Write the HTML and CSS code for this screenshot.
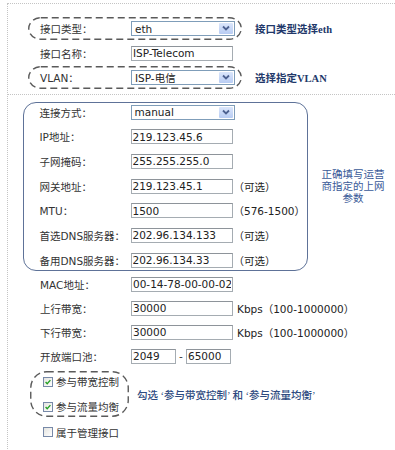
FILE: index.html
```html
<!DOCTYPE html>
<html lang="zh-CN">
<head>
    <meta charset="UTF-8">
    <meta name="viewport" content="width=device-width, initial-scale=1.0">
    <title>WAN接口设置</title>
    <link rel="stylesheet" href="styles.css">
</head>
<body>

    <div class="sheet">

        <!-- 接口类型 / 名称 / VLAN -->
        <div class="top">
            <div class="line">
                <div class="ring">
                    <svg><rect></rect></svg>
                    <div class="field">
                        <span class="lbl">接口类型：</span>
                        <div class="select"><span>eth</span><i class="arrow"><svg viewBox="0 0 14 11"><path d="M4 3.5 L7 6.5 L10 3.5"/></svg></i></div>
                    </div>
                </div>
                <span class="note">接口类型选择eth</span>
            </div>

            <div class="field">
                <span class="lbl">接口名称：</span>
                <input class="txt" type="text" value="ISP-Telecom">
            </div>

            <div class="line">
                <div class="ring">
                    <svg><rect></rect></svg>
                    <div class="field">
                        <span class="lbl">VLAN：</span>
                        <div class="select"><span>ISP-电信</span><i class="arrow"><svg viewBox="0 0 14 11"><path d="M4 3.5 L7 6.5 L10 3.5"/></svg></i></div>
                    </div>
                </div>
                <span class="note">选择指定VLAN</span>
            </div>
        </div>

        <div class="main">
            <!-- 运营商参数 -->
            <div class="wrap">
                <div class="box">
                    <div class="field">
                        <span class="lbl">连接方式：</span>
                        <div class="select"><span>manual</span><i class="arrow"><svg viewBox="0 0 14 11"><path d="M4 3.5 L7 6.5 L10 3.5"/></svg></i></div>
                    </div>
                    <div class="field">
                        <span class="lbl">IP地址：</span>
                        <input class="txt" type="text" value="219.123.45.6">
                    </div>
                    <div class="field">
                        <span class="lbl">子网掩码：</span>
                        <input class="txt" type="text" value="255.255.255.0">
                    </div>
                    <div class="field">
                        <span class="lbl">网关地址：</span>
                        <input class="txt" type="text" value="219.123.45.1">
                        <span class="hint">（可选）</span>
                    </div>
                    <div class="field">
                        <span class="lbl">MTU：</span>
                        <input class="txt" type="text" value="1500">
                        <span class="hint">（576-1500）</span>
                    </div>
                    <div class="field">
                        <span class="lbl">首选DNS服务器：</span>
                        <input class="txt" type="text" value="202.96.134.133">
                        <span class="hint">（可选）</span>
                    </div>
                    <div class="field">
                        <span class="lbl">备用DNS服务器：</span>
                        <input class="txt" type="text" value="202.96.134.33">
                        <span class="hint">（可选）</span>
                    </div>
                </div>
                <p class="side-note">正确填写运营商指定的上网参数</p>
            </div>

            <div class="field">
                <span class="lbl">MAC地址：</span>
                <input class="txt" type="text" value="00-14-78-00-00-02">
            </div>
            <div class="field">
                <span class="lbl">上行带宽：</span>
                <input class="txt" type="text" value="30000">
                <span class="hint unit">Kbps（100-1000000）</span>
            </div>
            <div class="field">
                <span class="lbl">下行带宽：</span>
                <input class="txt" type="text" value="30000">
                <span class="hint unit">Kbps（100-1000000）</span>
            </div>
            <div class="field">
                <span class="lbl">开放端口池：</span>
                <input class="txt port" type="text" value="2049">
                <span class="dash">-</span>
                <input class="txt port" type="text" value="65000">
            </div>

            <!-- 勾选项 -->
            <div class="line">
                <div class="ring ring-check">
                    <svg><rect></rect></svg>
                    <label class="check"><i class="cb on"><svg viewBox="0 0 10 10"><path d="M2 5 L4 7.2 L8 2.6"/></svg></i>参与带宽控制</label>
                    <label class="check"><i class="cb on"><svg viewBox="0 0 10 10"><path d="M2 5 L4 7.2 L8 2.6"/></svg></i>参与流量均衡</label>
                </div>
                <span class="note">勾选 ‘参与带宽控制’ 和 ‘参与流量均衡’</span>
            </div>

            <label class="check solo"><i class="cb"></i>属于管理接口</label>
        </div>

    </div>

</body>
</html>
```

FILE: styles.css
```css
/* 整体页面 */
body {
    margin: 0;
    background: #fff;
    font-family: "DejaVu Sans", "Noto Sans CJK SC", sans-serif;
    font-size: 10.5px;
    color: #333;
}

.sheet {
    margin: 3px 0 0 7px;
    min-height: 447px;
    border-top: 1px dotted #c4c4c4;
    border-left: 1px dotted #c4c4c4;
}

/* 上半部分：接口类型等 */
.top {
    display: flex;
    flex-direction: column;
    gap: 4px;
    padding: 13px 0 5px 32px;
    border-bottom: 1px dotted #c4c4c4;
}

.main {
    display: flex;
    flex-direction: column;
    gap: 6px;
    padding: 7px 0 0 32px;
}

.line {
    display: flex;
    align-items: center;
}

.field {
    display: flex;
    align-items: center;
    height: 18px;
    white-space: nowrap;
}

.lbl {
    width: 91px;
    flex: none;
}

/* 虚线椭圆圈 */
.ring {
    position: relative;
    margin-left: -12px;
    padding: 2.5px 7px 2.5px 12px;
}
.ring > svg {
    position: absolute;
    left: 0;
    top: 0;
    width: 100%;
    height: 100%;
    overflow: visible;
    pointer-events: none;
}
.ring rect {
    x: 0.75px;
    y: 0.75px;
    width: calc(100% - 1.5px);
    height: calc(100% - 1.5px);
    rx: 12px;
    fill: none;
    stroke: #5a5a5a;
    stroke-width: 1.4;
    stroke-dasharray: 7 4;
}

.ring-check {
    display: flex;
    flex-direction: column;
    gap: 7px;
    width: 99px;
    box-sizing: border-box;
    margin-left: -10px;
    padding: 1.5px 6px 1.5px 13px;
}
.ring-check rect {
    rx: 16px;
}

.note {
    margin-left: 13px;
    font-family: "Liberation Serif", "Noto Sans CJK SC", serif;
    font-size: 10.5px;
    font-weight: 600;
    color: #22386a;
    white-space: nowrap;
}
.ring-check + .note {
    margin-left: 8px;
    font-weight: 500;
    color: #2d4a80;
}

/* 输入框和下拉框 */
.txt {
    width: 102px;
    height: 15px;
    box-sizing: border-box;
    margin: 0;
    padding: 0 1px;
    border: 1px solid #a5acb2;
    border-top-color: #8e949a;
    font-family: "DejaVu Sans", sans-serif;
    font-size: 10.5px;
    color: #222;
    background: #fff;
}
.txt.port {
    width: 45px;
}
.dash {
    width: 10px;
    text-align: center;
}

.select {
    display: flex;
    align-items: center;
    justify-content: space-between;
    width: 104px;
    height: 15px;
    box-sizing: border-box;
    padding: 0 1px 0 3px;
    border: 1px solid #7f9db9;
    font-family: "DejaVu Sans", "Noto Sans CJK SC", sans-serif;
    color: #222;
}
.arrow {
    display: block;
    width: 14px;
    height: 11px;
    background: linear-gradient(#dbe6fb, #b8ccf3);
    border-radius: 1px;
}
.arrow svg {
    display: block;
    width: 14px;
    height: 11px;
}
.arrow path {
    fill: none;
    stroke: #4d6190;
    stroke-width: 1.8;
}

.hint {
    margin-left: 1px;
    color: #222;
}
.hint.unit {
    margin-left: 4px;
}

/* 圆角框：运营商参数 */
.wrap {
    display: flex;
    align-items: center;
    margin-bottom: -2px;
}
.box {
    display: flex;
    flex-direction: column;
    gap: 6.7px;
    width: 285px;
    box-sizing: border-box;
    margin-left: -17px;
    padding: 0 0 1px 15.5px;
    border: 1.5px solid #5e7298;
    border-radius: 13px;
}
.side-note {
    width: 66px;
    margin: 0 0 0 12px;
    text-align: center;
    font-family: "Liberation Serif", "Noto Sans CJK SC", serif;
    font-size: 10.5px;
    line-height: 12px;
    color: #3a5a98;
}

/* 复选框 */
.check {
    display: flex;
    align-items: center;
    gap: 3px;
    height: 18px;
    white-space: nowrap;
}
.check.solo {
    padding-left: 3px;
}
.cb {
    display: block;
    width: 10px;
    height: 10px;
    box-sizing: border-box;
    border: 1px solid #7789a8;
    background: linear-gradient(135deg, #e4e4e0, #fff);
}
.cb svg {
    display: block;
    width: 8px;
    height: 8px;
}
.cb path {
    fill: none;
    stroke: #23a023;
    stroke-width: 1.7;
}
```
